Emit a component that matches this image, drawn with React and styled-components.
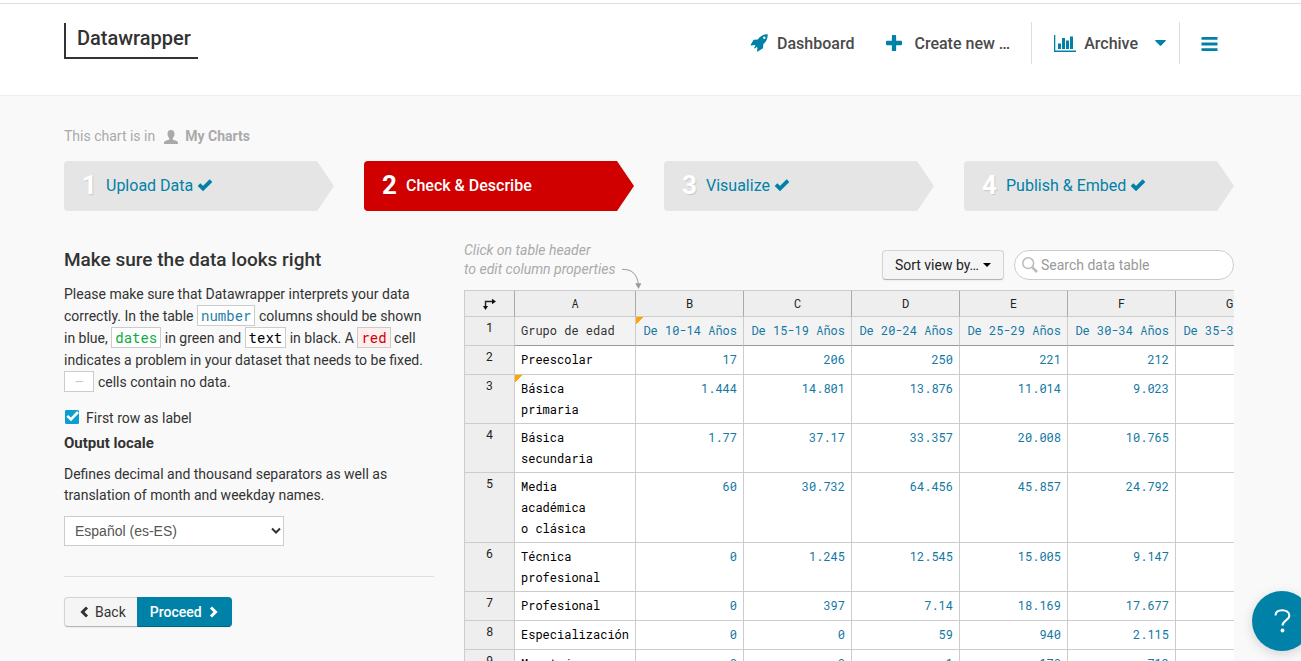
import React from "react";
import styled, { createGlobalStyle, css } from "styled-components";

const sans = `Roboto, "Liberation Sans", sans-serif`;
const mono = `"Roboto Mono", "DejaVu Sans Mono", monospace`;
const teal = "#0081a8";

const GlobalStyle = createGlobalStyle`
  *, *::before, *::after { box-sizing: border-box; }
  body {
    margin: 0;
    background: #f9f9f9;
    color: #333;
    font: 14px/21px ${sans};
    overflow-x: hidden;
  }
  button, input, select { font: inherit; color: inherit; }
  a { color: inherit; text-decoration: none; }
  svg { display: block; flex: none; }
`;

const TopStrip = styled.div`
  padding-top: 3px;
  background: #fff;
`;

const Header = styled.header`
  padding: 18px 67px 31px 64px;
  display: flex;
  align-items: flex-start;
  justify-content: space-between;
  border-top: 1px solid #ddd;
  border-bottom: 1px solid #eee;
`;

const Logo = styled.a`
  display: block;
  margin-top: 1px;
  width: 134px;
  height: 36px;
  padding: 3px 0 0 11px;
  border-left: 2px solid #333;
  border-bottom: 2px solid #333;
  font-size: 20px;
  line-height: 24px;
  font-weight: 500;
`;

const Nav = styled.nav`
  display: flex;
  align-items: center;
  height: 42px;
  color: #4a4a4a;
  font-size: 16px;
  font-weight: 500;
`;

const NavLink = styled.a`
  display: flex;
  align-items: center;
  height: 42px;
  gap: ${(p) => p.$gap || 8}px;
  padding: 0 ${(p) => p.$right || 0}px 0 ${(p) => p.$left || 0}px;
  border-left: ${(p) => (p.$divided ? "1px solid #ddd" : "0")};
  svg { color: ${teal}; }
`;

const Caret = styled.svg`
  margin-left: 9px;
`;

const Main = styled.main`
  padding: 30px 67px 0 64px;
`;

const Crumb = styled.div`
  display: flex;
  align-items: center;
  color: #aaa;
  svg { margin: 0 7px 0 9px; }
`;

const Steps = styled.ol`
  display: grid;
  grid-template-columns: repeat(4, 1fr);
  gap: 30px;
  margin: 14px 0 30px;
  padding: 0;
  list-style: none;
`;

const Step = styled.li`
  height: 50px;
  display: flex;
`;

const StepLink = styled.a`
  flex: 1;
  display: flex;
  align-items: center;
  padding: 0 0 2px 18px;
  border-radius: 4px 0 0 4px;
  clip-path: polygon(0 0, calc(100% - 17px) 0, 100% 50%, calc(100% - 17px) 100%, 0 100%);
  background: ${(p) => (p.$active ? "#d00000" : "#e5e5e5")};
  color: ${(p) => (p.$active ? "#fff" : teal)};
  font-size: 16px;
  font-weight: ${(p) => (p.$active ? 500 : 400)};
  svg { margin-left: 4px; }
`;

const StepNumber = styled.b`
  width: 24px;
  color: #fff;
  font-size: 26px;
  font-weight: 700;
  text-shadow: 1px 1px 1px rgba(0, 0, 0, 0.12);
`;

const Columns = styled.div`
  display: grid;
  grid-template-columns: 370px minmax(0, 1fr);
  gap: 30px;
`;

const Title = styled.h1`
  margin: 5px 0 9px;
  font-size: 19px;
  line-height: 28px;
  font-weight: 500;
`;

const Text = styled.p`
  margin: 0;
`;

const Intro = styled(Text)`
  line-height: 22px;
  margin-bottom: 15px;
`;

const Sample = styled.code`
  padding: 0 ${(p) => p.$pad || 3}px;
  border: 1px solid #ccc;
  background: ${(p) => p.$bg || "#fff"};
  color: ${(p) => p.$color};
  font-family: ${mono};
  font-size: 14px;
`;

const CheckLabel = styled.label`
  display: flex;
  align-items: center;
  gap: 6px;
  height: 21px;
`;

const CheckWrap = styled.span`
  display: grid;
  width: 16px;
  height: 16px;
  margin-bottom: 4px;
  > * { grid-area: 1 / 1; place-self: center; }
  svg { visibility: hidden; pointer-events: none; color: #fff; }
  input:checked + svg { visibility: visible; }
`;

const CheckInput = styled.input`
  appearance: none;
  width: 14px;
  height: 14px;
  margin: 0;
  border: 1px solid #0a9fd0;
  border-radius: 1px;
  background: #fff;
  &:checked { background: #0a9fd0; }
`;

const LocaleLabel = styled.label`
  display: block;
  margin: 4px 0 10px;
  font-size: 15px;
  font-weight: 700;
`;

const SelectWrap = styled.div`
  display: grid;
  align-items: center;
  width: 220px;
  margin: 10px 0 30px;
  > * { grid-area: 1 / 1; }
  svg { justify-self: end; margin-right: 3px; pointer-events: none; color: #333; }
`;

const Select = styled.select`
  appearance: none;
  width: 100%;
  height: 30px;
  padding: 0 10px;
  border: 1px solid #ccc;
  border-radius: 0;
  background: #fff;
  color: #555;
  font: 14px/20px "Liberation Sans", sans-serif;
`;

const Actions = styled.div`
  display: flex;
  padding-top: 20px;
  border-top: 1px solid #ddd;
`;

const Button = styled.button`
  display: flex;
  align-items: center;
  height: 30px;
  padding: 0 11px;
  gap: 6px;
  border: 1px solid #d4d4d4;
  border-bottom-color: #b3b3b3;
  border-radius: 4px;
  background: #f5f5f5;
  box-shadow: 0 1px 2px rgba(0, 0, 0, 0.05);
`;

const BackButton = styled(Button)`
  border-right: 0;
  border-radius: 4px 0 0 4px;
  padding-left: 14px;
`;

const ProceedButton = styled(Button)`
  border-color: ${teal} ${teal} #00607d;
  border-radius: 0 4px 4px 0;
  background: ${teal};
  color: #fff;
  font-weight: 500;
  padding: 0 12px;
  gap: 7px;
`;

const Toolbar = styled.div`
  display: flex;
  align-items: flex-start;
  height: 49px;
`;

const Hint = styled.div`
  display: flex;
  align-items: flex-end;
  margin-right: auto;
  color: #aaa;
  font-style: italic;
  line-height: 19px;
  svg { margin: 0 0 -10px 5px; }
`;

const SortButton = styled(Button)`
  margin: 9px 10px 0 0;
  padding: 0 12px;
  gap: 4px;
  color: #222;
`;

const SearchBox = styled.label`
  display: flex;
  align-items: center;
  width: 220px;
  height: 30px;
  margin-top: 9px;
  padding: 0 7px;
  gap: 3px;
  border: 1px solid #ccc;
  border-radius: 15px;
  background: #fff;
`;

const SearchInput = styled.input`
  min-width: 0;
  flex: 1;
  padding: 0;
  border: 0;
  outline: 0;
  background: none;
  &::placeholder { color: #999; opacity: 1; }
`;

const Sheet = styled.div`
  overflow: hidden;
  border: solid #ccc;
  border-width: 1px 0 0 1px;
`;

const Table = styled.table`
  table-layout: fixed;
  width: 819px;
  border-collapse: separate;
  border-spacing: 0;
  font: 12px/21px ${mono};
`;

const cell = css`
  border: solid #ccc;
  border-width: 0 1px 1px 0;
  vertical-align: top;
`;

const ColumnHead = styled.th`
  ${cell}
  height: 26px;
  padding: 2px 0;
  border-right-color: #aaa;
  background: #eee;
  color: #222;
  font-weight: 400;
  svg { margin: 5px auto 0; }
`;

const RowHead = styled.th`
  ${cell}
  padding: 0;
  background: #eee;
  color: #222;
  font-weight: 400;
`;

const Cell = styled.td`
  ${cell}
  height: 29px;
  padding: 3px 6px;
  background: ${(p) => (p.$label ? "#f3f3f3" : "#fff")};
  border-bottom-color: ${(p) => (p.$label ? "#999" : "#ccc")};
  color: ${(p) => (p.$number ? "#1478a3" : p.$label ? "#333" : "#000")};
  text-align: ${(p) => (p.$number ? "right" : "left")};
  white-space: pre;
  ${(p) => p.$note && css`
    background-image: linear-gradient(135deg, #ffa500 5px, transparent 5px);
  `}
`;

const Help = styled.button`
  position: fixed;
  right: -11px;
  bottom: 10px;
  width: 60px;
  height: 60px;
  padding: 0;
  display: grid;
  place-items: center;
  border: 0;
  border-radius: 50%;
  background: ${teal};
  color: #fff;
  box-shadow: 0 3px 12px rgba(0, 0, 0, 0.15);
`;

const CheckIcon = () => (
  <svg width="16" height="14" viewBox="0 0 16 14" fill="none" stroke="currentColor" strokeWidth="3.8">
    <path d="M2 6.700 6 10.500 14 2.700" strokeLinejoin="miter" />
  </svg>
);

const Chevron = ({ left }) => (
  <svg width="10" height="12" viewBox="0 0 10 12" fill="none" stroke="currentColor" strokeWidth="3">
    <path d={left ? "M8 1.5 3.5 6 8 10.5" : "M2 1.5 6.5 6 2 10.5"} />
  </svg>
);

const steps = [
  { name: "Upload Data", done: true },
  { name: "Check & Describe", active: true },
  { name: "Visualize", done: true },
  { name: "Publish & Embed", done: true },
];

const letters = ["A", "B", "C", "D", "E", "F", "G"];

const rows = [
  ["Grupo de edad", "De 10-14 Años", "De 15-19 Años", "De 20-24 Años", "De 25-29 Años", "De 30-34 Años", "De 35-39 Años"],
  ["Preescolar", "17", "206", "250", "221", "212", ""],
  ["Básica\nprimaria", "1.444", "14.801", "13.876", "11.014", "9.023", ""],
  ["Básica\nsecundaria", "1.77", "37.17", "33.357", "20.008", "10.765", ""],
  ["Media\nacadémica\no clásica", "60", "30.732", "64.456", "45.857", "24.792", ""],
  ["Técnica\nprofesional", "0", "1.245", "12.545", "15.005", "9.147", ""],
  ["Profesional", "0", "397", "7.14", "18.169", "17.677", ""],
  ["Especialización", "0", "0", "59", "940", "2.115", ""],
  ["Maestría", "0", "0", "1", "170", "712", ""],
];

const noted = (r, c) => (r === 0 && c === 1) || (r === 2 && c === 0);

export default function App() {
  return (
    <>
      <GlobalStyle />
      <TopStrip>
        <Header>
          <Logo href="#">Datawrapper</Logo>
          <Nav>
            <NavLink href="#" $right={32} $gap={9}>
              <svg width="18" height="18" viewBox="0 0 18 18" fill="currentColor">
                <path
                  fillRule="evenodd"
                  d="M17.700.300c.2 3.900-1.300 7.200-4.300 9.800l-.4 3.900c0 .3-.2.500-.4.600l-4.800 3c-.5.200-.9 0-.8-.5l.5-3.300-.8-.8-1.900 1.500-.8-.8 1.500-1.900-.8-.8-3.500.5c-.5 0-.7-.3-.5-.7L3.300 6.200c.1-.3.4-.4.700-.5l3.800-.3C10.400 2 13.600.100 17.700.300zM14.300 2.600a1.200 1.200 0 1 0 0 2.400 1.200 1.200 0 0 0 0-2.400z"
                />
              </svg>
              Dashboard
            </NavLink>
            <NavLink href="#" $right={21} $gap={12}>
              <svg width="16" height="16" viewBox="0 0 15 15" fill="currentColor">
                <path d="M6.300 0h2.400q.8 0 .8.800v4.700h4.700q.8 0 .8.800v2.400q0 .8-.8.800H9.500v4.700q0 .8-.8.800H6.300q-.8 0-.8-.8V9.500H.8Q0 9.500 0 8.700V6.300q0-.8.8-.8h4.700V.8q0-.8.8-.8z" />
              </svg>
              Create new …
            </NavLink>
            <NavLink href="#" $divided $left={22} $right={13}>
              <svg width="22" height="17" viewBox="0 0 22 17" fill="currentColor">
                <path d="M0 0h1.300v15.500H22V17H0zM4 8.500h3V14H4zM8 3h3v11H8zM12 5.500h3V14h-3zM16 1.500h3V14h-3z" />
              </svg>
              Archive
              <Caret width="11" height="6" viewBox="0 0 11 6" fill="currentColor">
                <path d="M.6 0h9.800q.8.200.3.900L6.200 5.600q-.7.600-1.400 0L.3.900Q-.2.200.6 0z" />
              </Caret>
            </NavLink>
            <NavLink href="#" $divided $left={21} $right={16} aria-label="Menu">
              <svg width="17" height="16" viewBox="0 0 17 16" fill="currentColor">
                <path d="M.5 2h16v2.800H.5zM.5 7.600h16v2.800H.5zM.5 13.200h16V16H.5z" />
              </svg>
            </NavLink>
          </Nav>
        </Header>
      </TopStrip>

      <Main>
        <Crumb>
          This chart is in
          <svg width="14" height="14" viewBox="0 0 14 14" fill="#aaa">
            <path d="M7 0c2.300 0 3.600 1.500 3.500 4-.1 1.800-.7 3-1.700 4v1.400c1.400.8 4 1.200 4.800 2.200.4.500.4 1.300.4 2.400H0c0-1.100 0-1.900.4-2.400.8-1 3.400-1.400 4.800-2.200V8c-1-1-1.600-2.200-1.700-4C3.400 1.500 4.700 0 7 0z" />
          </svg>
          <b>My Charts</b>
        </Crumb>

        <Steps>
          {steps.map((s, i) => (
            <Step key={s.name}>
              <StepLink href="#" $active={s.active}>
                <StepNumber>{i + 1}</StepNumber>
                {s.name}
                {s.done && <CheckIcon />}
              </StepLink>
            </Step>
          ))}
        </Steps>

        <Columns>
          <section>
            <Title>Make sure the data looks right</Title>
            <Intro>
              Please make sure that Datawrapper interprets your data correctly. In the table{" "}
              <Sample $color="#1d81a8">number</Sample> columns should be shown in blue,{" "}
              <Sample $color="#0aad3c">dates</Sample> in green and <Sample $color="#000">text</Sample> in black. A{" "}
              <Sample $color="#d00000" $bg="#fee">red</Sample> cell indicates a problem in your dataset that needs to be
              fixed. <Sample $color="#ccc" $pad={10}>–</Sample> cells contain no data.
            </Intro>
            <CheckLabel>
              <CheckWrap>
                <CheckInput type="checkbox" defaultChecked />
                <svg width="14" height="14" viewBox="0 0 14 14" fill="none" stroke="currentColor" strokeWidth="2.600">
                  <path d="M2.300 5.800 6 9.500 13 2" />
                </svg>
              </CheckWrap>
              First row as label
            </CheckLabel>
            <LocaleLabel htmlFor="locale">Output locale</LocaleLabel>
            <Text>Defines decimal and thousand separators as well as translation of month and weekday names.</Text>
            <SelectWrap>
              <Select id="locale" defaultValue="es-ES">
                <option value="es-ES">Español (es-ES)</option>
              </Select>
              <svg width="10" height="8" viewBox="0 0 10 8" fill="none" stroke="currentColor" strokeWidth="2">
                <path d="M1 1.500 5 5.500 9 1.500" />
              </svg>
            </SelectWrap>
            <Actions>
              <BackButton type="button"><Chevron left />Back</BackButton>
              <ProceedButton type="button">Proceed<Chevron /></ProceedButton>
            </Actions>
          </section>

          <section>
            <Toolbar>
              <Hint>
                <span>Click on table header<br />to edit column properties</span>
                <svg width="20" height="21" viewBox="0 0 20 21">
                  <path d="M1 1.500C9 1 16 5 17.300 16" fill="none" stroke="#aaa" strokeWidth="1.200" />
                  <path d="M14.300 15.300h6L17.500 21z" fill="#999" />
                </svg>
              </Hint>
              <SortButton type="button">
                Sort view by…
                <svg width="8" height="4" viewBox="0 0 8 4"><path d="M0 0h8L4 4z" fill="#000" /></svg>
              </SortButton>
              <SearchBox>
                <svg width="16" height="16" viewBox="0 0 16 16" fill="none" stroke="#bbb">
                  <circle cx="6.200" cy="6.200" r="5.400" strokeWidth="1.500" />
                  <path d="M10.300 10.300 15 15" strokeWidth="2.600" />
                </svg>
                <SearchInput type="text" placeholder="Search data table" aria-label="Search data table" />
              </SearchBox>
            </Toolbar>
            <Sheet>
              <Table>
                <colgroup>
                  <col width="50" />
                  <col width="121" />
                  {letters.slice(1).map((l) => <col key={l} width="108" />)}
                </colgroup>
                <thead>
                  <tr>
                    <ColumnHead aria-label="Transpose">
                      <svg width="13" height="12" viewBox="0 0 13 12">
                        <path d="M2.500 9V3.500H10" fill="none" stroke="#222" strokeWidth="1.400" />
                        <path d="M0 8h5L2.500 12zM9 .8l4 2.700-4 2.700z" fill="#111" />
                      </svg>
                    </ColumnHead>
                    {letters.map((l) => <ColumnHead key={l} scope="col">{l}</ColumnHead>)}
                  </tr>
                </thead>
                <tbody>
                  {rows.map((row, r) => (
                    <tr key={row[0]}>
                      <RowHead scope="row">{r + 1}</RowHead>
                      {row.map((v, c) => (
                        <Cell key={c} $number={c > 0} $label={r === 0} $note={noted(r, c)}>{v}</Cell>
                      ))}
                    </tr>
                  ))}
                </tbody>
              </Table>
            </Sheet>
          </section>
        </Columns>
      </Main>

      <Help type="button" aria-label="Help">
        <svg width="17" height="24" viewBox="0 0 17 24" fill="none" stroke="#fff" strokeWidth="2">
          <path d="M1.500 6.500C1.500 3 4.500 1.200 8.300 1.200s7 2 7 5.600c0 4.600-6.800 4.700-6.800 9.700" />
          <circle cx="8.500" cy="21.500" r="1.900" fill="#fff" stroke="none" />
        </svg>
      </Help>
    </>
  );
}
